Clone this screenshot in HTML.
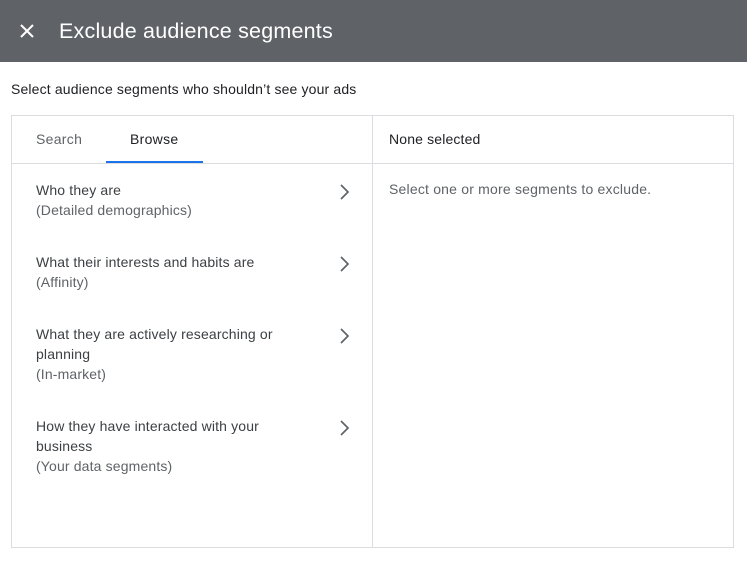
<!DOCTYPE html>
<html><head><style>
body{margin:0;width:747px;height:562px;background:#fff;font-family:"Liberation Sans",Arial,sans-serif;position:relative;overflow:hidden;color:#3c4043}
.hdr{position:absolute;left:0;top:0;width:747px;height:62px;background:#5f6368}
.t{position:absolute;white-space:nowrap}
.box{position:absolute;left:11px;top:115px;width:721px;height:431px;border:1px solid #dadce0}
.v{position:absolute;left:372px;top:115px;width:1px;height:433px;background:#dadce0}
.h{position:absolute;left:11px;top:163px;width:723px;height:1px;background:#dadce0}
.it{position:absolute;left:36px;font-size:14px;line-height:20px;color:#3c4043;letter-spacing:0.15px}
.it span{color:#5f6368}
svg.ch{position:absolute;left:336px}
</style></head><body>
<div class="hdr"></div>
<svg style="position:absolute;left:19px;top:23px" width="16" height="16" viewBox="0 0 16 16"><path d="M2 2L14 14M14 2L2 14" stroke="#fff" stroke-width="2"/></svg>
<div class="t" style="left:59px;top:19px;font-size:21.5px;color:#fff;letter-spacing:0.2px">Exclude audience segments</div>
<div class="t" style="left:11px;top:81px;font-size:14px;color:#202124;letter-spacing:0.15px">Select audience segments who shouldn’t see your ads</div>
<div class="box"></div><div class="v"></div><div class="h"></div>
<div class="t" style="left:36px;top:131px;font-size:14px;color:#5f6368;letter-spacing:0.3px">Search</div>
<div class="t" style="left:130px;top:131px;font-size:14px;color:#202124;letter-spacing:0.3px">Browse</div>
<div style="position:absolute;left:106px;top:161px;width:97px;height:2px;background:#1a73e8"></div>
<div class="t" style="left:389px;top:131px;font-size:14px;color:#202124;letter-spacing:0.15px">None selected</div>
<div class="t" style="left:389px;top:181px;font-size:14px;color:#5f6368;letter-spacing:0.2px">Select one or more segments to exclude.</div>
<div class="it" style="top:180px">Who they are<br><span>(Detailed demographics)</span></div>
<div class="it" style="top:252px">What their interests and habits are<br><span>(Affinity)</span></div>
<div class="it" style="top:324px">What they are actively researching or<br>planning<br><span>(In-market)</span></div>
<div class="it" style="top:416px">How they have interacted with your<br>business<br><span>(Your data segments)</span></div>
<svg class="ch" style="top:183px" width="16" height="18" viewBox="0 0 16 18"><path d="M5 2L12 9L5 16" fill="none" stroke="#5f6368" stroke-width="1.7"/></svg>
<svg class="ch" style="top:255px" width="16" height="18" viewBox="0 0 16 18"><path d="M5 2L12 9L5 16" fill="none" stroke="#5f6368" stroke-width="1.7"/></svg>
<svg class="ch" style="top:327px" width="16" height="18" viewBox="0 0 16 18"><path d="M5 2L12 9L5 16" fill="none" stroke="#5f6368" stroke-width="1.7"/></svg>
<svg class="ch" style="top:419px" width="16" height="18" viewBox="0 0 16 18"><path d="M5 2L12 9L5 16" fill="none" stroke="#5f6368" stroke-width="1.7"/></svg>
</body></html>
